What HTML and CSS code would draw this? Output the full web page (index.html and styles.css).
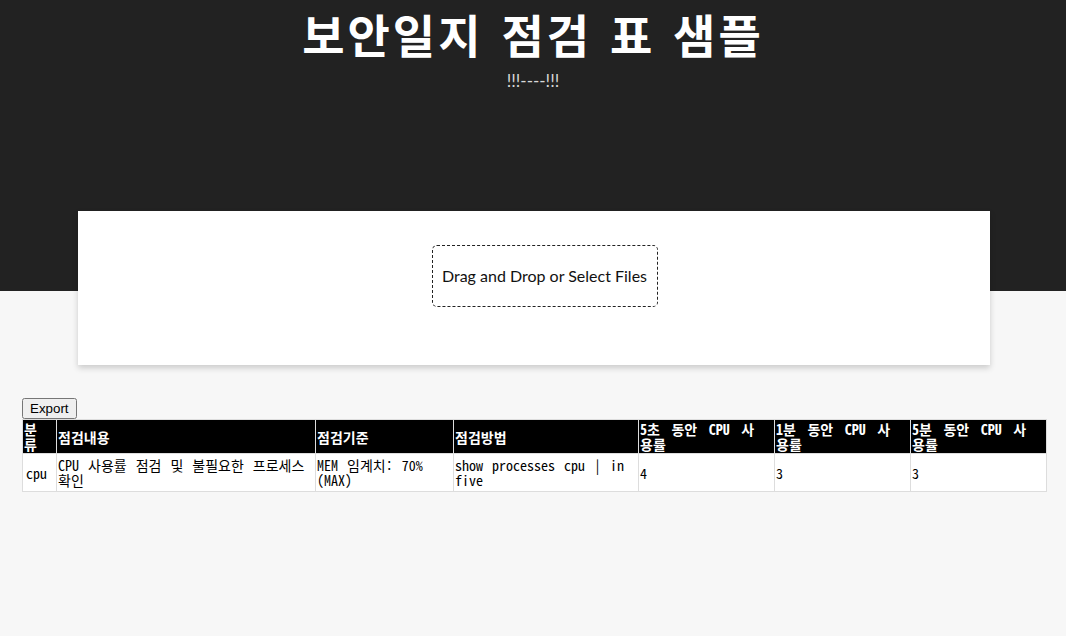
FILE: index.html
```html
<!DOCTYPE html>
<html lang="ko">
<head>
<meta charset="utf-8">
<title>보안일지 점검 표 샘플</title>
<link rel="stylesheet" href="styles.css">
</head>
<body>
<header class="hero">
  <h1 class="title">보안일지 점검 표 샘플</h1>
  <p class="subtitle">!!!----!!!</p>
</header>
<section class="upload-band">
  <div class="card">
    <div class="dropzone">Drag and Drop or Select Files</div>
  </div>
</section>
<main class="content">
  <div class="toolbar"><button class="export-btn" type="button">Export</button></div>
  <table class="report">
    <colgroup>
      <col class="c1"><col class="c2"><col class="c3"><col class="c4"><col class="c5"><col class="c6"><col class="c7">
    </colgroup>
    <thead>
      <tr>
        <th>분류</th>
        <th>점검내용</th>
        <th>점검기준</th>
        <th>점검방법</th>
        <th>5초 동안 CPU 사용률</th>
        <th>1분 동안 CPU 사용률</th>
        <th>5분 동안 CPU 사용률</th>
      </tr>
    </thead>
    <tbody>
      <tr>
        <td class="type">cpu</td>
        <td>CPU 사용률 점검 및 불필요한 프로세스 확인</td>
        <td>MEM 임계치: 70% (MAX)</td>
        <td>show processes cpu | in five</td>
        <td>4</td>
        <td>3</td>
        <td>3</td>
      </tr>
    </tbody>
  </table>
</main>
</body>
</html>
```

FILE: styles.css
```css
html, body {
  margin: 0;
  padding: 0;
}
body {
  background: #f7f7f7;
  font-family: "Lato", "Noto Sans CJK KR", sans-serif;
}
.hero {
  background: #222222;
  height: 211px;
  box-sizing: border-box;
  text-align: center;
}
.title {
  margin: 0;
  color: #ffffff;
  font-family: "Noto Sans CJK KR", sans-serif;
  font-weight: 700;
  font-size: 46px;
  line-height: 66px;
  letter-spacing: 3px;
  word-spacing: 2px;
}
.subtitle {
  margin: 6px 0 0;
  color: #d8d8d8;
  font-family: "Lato", sans-serif;
  font-size: 17px;
  line-height: 18px;
}
.upload-band {
  background: linear-gradient(#222222 0, #222222 80px, #f7f7f7 80px);
  padding: 0 76px 0 78px;
}
.card {
  background: #ffffff;
  height: 154px;
  box-sizing: border-box;
  padding-top: 34px;
  display: flex;
  justify-content: center;
  align-items: flex-start;
  box-shadow: 0 3px 6px rgba(0, 0, 0, 0.18);
}
.dropzone {
  width: 226px;
  height: 62px;
  margin-left: 21px;
  padding-bottom: 2px;
  box-sizing: border-box;
  border: 1px dashed #222222;
  border-radius: 5px;
  display: flex;
  align-items: center;
  justify-content: center;
  font-family: "Lato", sans-serif;
  font-size: 16px;
  color: #111111;
}
.content {
  padding: 33px 20px 0 22px;
}
.toolbar {
  height: 21px;
}
.export-btn {
  font-family: "Liberation Sans", Arial, sans-serif;
  font-size: 13.33px;
  height: 21px;
  margin: 0;
  padding: 1px 6px;
  vertical-align: top;
}
.report {
  width: 1024px;
  table-layout: fixed;
  border-collapse: collapse;
  border: 1px solid #dddddd;
  font-family: "Noto Sans Mono CJK KR", "Liberation Mono", "Noto Sans CJK KR", monospace;
  font-size: 14px;
  line-height: 15px;
  word-spacing: 2px;
}
.c1 { width: 34px; }
.c2 { width: 259px; }
.c3 { width: 138px; }
.c4 { width: 185px; }
.c5 { width: 136px; }
.c6 { width: 136px; }
.c7 { width: 136px; }
.report th {
  background: #000000;
  color: #ffffff;
  font-weight: 700;
  text-align: left;
  padding: 2px 10px 1px 1px;
  border: 1px solid #dddddd;
  vertical-align: middle;
  word-spacing: 4.5px;
}
.report td {
  background: #ffffff;
  color: #000000;
  padding: 4px 2px 3px 1px;
  border: 1px solid #dddddd;
  vertical-align: middle;
}
.report td.type {
  padding-left: 3px;
}
```
